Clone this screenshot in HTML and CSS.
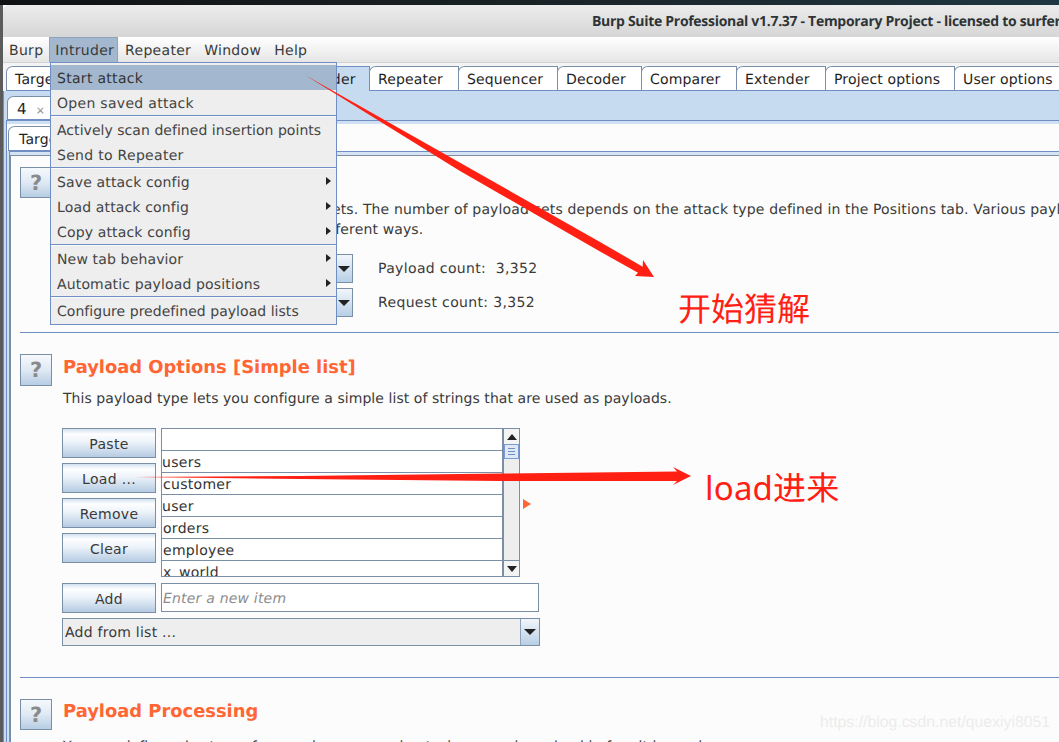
FILE: index.html
```html
<!DOCTYPE html>
<html lang="en">
<head>
<meta charset="utf-8">
<title>Burp Suite Professional</title>
<link rel="stylesheet" href="styles.css">
</head>
<body>
<div class="topstrip"></div>
<div class="window">
  <div class="titlebar">Burp Suite Professional v1.7.37 - Temporary Project - licensed to surferxyz</div>
  <div class="menubar">
    <span class="mb-item">Burp</span>
    <span class="mb-item active">Intruder</span>
    <span class="mb-item">Repeater</span>
    <span class="mb-item">Window</span>
    <span class="mb-item">Help</span>
  </div>
  <div class="tabs main-tabs">
    <span class="tab t-target">Target</span>
    <span class="tab t-proxy">Proxy</span>
    <span class="tab t-spider">Spider</span>
    <span class="tab t-scanner">Scanner</span>
    <span class="tab selected t-intruder">Intruder</span>
    <span class="tab t-repeater">Repeater</span>
    <span class="tab t-sequencer">Sequencer</span>
    <span class="tab t-decoder">Decoder</span>
    <span class="tab t-comparer">Comparer</span>
    <span class="tab t-extender">Extender</span>
    <span class="tab t-project">Project options</span>
    <span class="tab t-user">User options</span>
  </div>
  <div class="band">
    <div class="tabs sub-tabs">
      <span class="tab small">4 <i class="close">×</i></span>
    </div>
    <div class="frame">
      <div class="tabs inner-tabs">
        <span class="tab">Target</span>
        <span class="tab">Positions</span>
        <span class="tab">Payloads</span>
        <span class="tab">Options</span>
      </div>
      <div class="content">
        <section class="sec sec-first">
          <div class="sec-head">
            <span class="help">?</span>
            <h2>Payload Sets</h2>
          </div>
          <p class="desc two-line">You can define one or more payload sets. The number of payload sets depends on the attack type defined in the Positions tab. Various payload types are available for each payload set, and each<br>payload type can be customized in different ways.</p>
          <div class="set-row">
            <label class="set-label">Payload set:</label>
            <div class="combo short"><span class="combo-text">1</span><span class="combo-btn"><i class="tri"></i></span></div>
            <span class="count">Payload count:&nbsp; 3,352</span>
          </div>
          <div class="set-row second">
            <label class="set-label">Payload type:</label>
            <div class="combo short"><span class="combo-text">Simple list</span><span class="combo-btn"><i class="tri"></i></span></div>
            <span class="count">Request count: 3,352</span>
          </div>
        </section>
        <hr class="rule r1">
        <section class="sec sec-two">
          <div class="sec-head">
            <span class="help">?</span>
            <h2>Payload Options [Simple list]</h2>
          </div>
          <p class="desc">This payload type lets you configure a simple list of strings that are used as payloads.</p>
          <div class="list-block">
            <div class="btn-col">
              <button class="btn">Paste</button>
              <button class="btn">Load ...</button>
              <button class="btn">Remove</button>
              <button class="btn">Clear</button>
            </div>
            <div class="listbox">
              <div class="rows">
                <div class="row"></div>
                <div class="row">users</div>
                <div class="row ind">customer</div>
                <div class="row">user</div>
                <div class="row ind">orders</div>
                <div class="row ind">employee</div>
                <div class="row ind last">x_world</div>
              </div>
              <div class="scrollbar">
                <span class="sb-btn"><i class="tri up"></i></span>
                <span class="sb-thumb"><i></i><i></i><i></i></span>
                <span class="sb-track"></span>
                <span class="sb-btn bottom"><i class="tri"></i></span>
              </div>
            </div>
            <i class="orange-arrow"></i>
          </div>
          <div class="add-row">
            <button class="btn">Add</button>
            <div class="add-input">Enter a new item</div>
          </div>
          <div class="combo wide"><span class="combo-text">Add from list ...</span><span class="combo-btn"><i class="tri"></i></span></div>
        </section>
        <hr class="rule r2">
        <section class="sec sec-three">
          <div class="sec-head">
            <span class="help">?</span>
            <h2>Payload Processing</h2>
          </div>
          <p class="desc">You can define rules to perform various processing tasks on each payload before it is used.</p>
        </section>
      </div>
    </div>
  </div>
</div>

<div class="menu">
  <div class="mi hot loose">Start attack</div>
  <div class="mi loose">Open saved attack</div>
  <div class="sep"></div>
  <div class="mi tight">Actively scan defined insertion points</div>
  <div class="mi loose">Send to Repeater</div>
  <div class="sep"></div>
  <div class="mi sub">Save attack config</div>
  <div class="mi sub">Load attack config</div>
  <div class="mi sub">Copy attack config</div>
  <div class="sep"></div>
  <div class="mi sub">New tab behavior</div>
  <div class="mi sub">Automatic payload positions</div>
  <div class="sep"></div>
  <div class="mi tight">Configure predefined payload lists</div>
</div>

<svg class="arrows" width="1059" height="742" viewBox="0 0 1059 742" aria-hidden="true">
  <polygon fill="#ff2013" points="305,75 600,242 642.7,266.7 643,260 654,277 635,276 638,272.7 600,251.5 460,171"/>
  <polygon fill="#ff2013" points="134,477 300,476 500,473.5 677,471.5 673,467 691,476 673,485 677,481 500,481 300,479"/>
</svg>
<div class="note note-start">开始猜解</div>
<div class="note note-load">load进来</div>
<div class="watermark">https://blog.csdn.net/quexiyi8051</div>
</body>
</html>
```

FILE: styles.css
```css
* { box-sizing: border-box; }
html, body { margin: 0; padding: 0; }
body {
  width: 1059px;
  height: 742px;
  overflow: hidden;
  position: relative;
  background: #fcfcfc;
  font-family: "DejaVu Sans", sans-serif;
  font-size: 14px;
  color: #3a3a3a;
  text-rendering: geometricPrecision;
}
.topstrip {
  height: 5px;
  background: linear-gradient(90deg, #101214, #1a2226 50%, #1f3742);
}
.window {
  border-left: 3px solid #5b5b5b;
  height: 737px;
  overflow: hidden;
  background: #fcfcfc;
}
.titlebar {
  height: 32px;
  padding: 1px 0 0 589px;
  border-top-left-radius: 6px;
  background: linear-gradient(#ececec, #d6d6d6);
  font-family: "Open Sans", sans-serif;
  font-weight: 700;
  font-size: 14px;
  letter-spacing: -0.3px;
  line-height: 32px;
  color: #2e3436;
  white-space: nowrap;
  overflow: hidden;
}
.menubar {
  height: 26px;
  display: flex;
  background: linear-gradient(#ffffff, #e6e6e6);
  border-bottom: 1px solid #d2d2d2;
}
.mb-item {
  padding: 0 6px;
  letter-spacing: 0.3px;
  line-height: 28px;
  margin-right: 1px;
  height: 25px;
}
.mb-item:first-child { margin-right: 0; }
.mb-item.active {
  padding-right: 4px;
  background: #a3b8cf;
  box-shadow: inset 0 1px 0 #8ea4bd, inset 1px 0 0 #8ea4bd, inset -1px 0 0 #8ea4bd;
}
.tabs { display: flex; align-items: flex-end; }
.main-tabs {
  height: 28px;
  padding: 3px 0 0 3px;
  background: #f4f4f4;
}
.tab {
  display: block;
  flex: none;
  height: 25px;
  padding: 0 8px;
  letter-spacing: 0.15px;
  line-height: 26px;
  background: #fff;
  color: #1f1f1f;
  border: 1px solid #7a8ea8;
  border-bottom: 1px solid #6f8fc4;
  border-top-left-radius: 7px 6px;
  margin-right: -1px;
  white-space: nowrap;
}
.tab.selected {
  background: #c6dbf0;
  border-color: #6f8fc4;
  border-bottom-color: #c6dbf0;
}
.t-target { width: 66px; }
.t-proxy { width: 71px; }
.t-spider { width: 70px; }
.t-scanner { width: 80px; }
.t-intruder { width: 81px; }
.t-repeater { width: 90px; }
.t-sequencer { width: 100px; }
.t-decoder { width: 85px; }
.t-comparer { width: 96px; }
.t-extender { width: 90px; }
.t-project { width: 130px; }
.t-user { width: 120px; }
.band {
  background: #c6dbf0;
  border-left: 1px solid #7a8ea8;
  height: 651px;
}
.sub-tabs {
  height: 29px;
  padding: 6px 0 0 3px;
}
.tab.small { width: 52px; height: 24px; padding-left: 9px; font-size: 15px; line-height: 24px; }
.close { font-style: normal; font-size: 11px; color: #8a8a8a; margin-left: 4px; }
.frame {
  border-top: 1px solid #6f8fc4;
  border-left: 1px solid #6f8fc4;
  margin-left: 2px;
  padding-top: 3px;
  height: 622px;
  background: #cfe0f2;
}
.inner-tabs {
  height: 27px;
  padding-left: 1px;
  padding-top: 2px;
  background: #fcfcfc;
}
.inner-tabs .tab { padding-left: 10px; }
.content {
  margin-left: 2px;
  border-top: 1px solid #6f8fc4;
  border-left: 1px solid #7a8ea8;
  box-shadow: inset 0 3px 0 #d5e3f2, inset 0 4px 0 #7f8d9e, inset 1px 0 0 #7a8ea8;
  background: #fcfcfc;
  padding: 15px 0 0 10px;
  height: 600px;
  overflow: hidden;
}
.sec-head { display: flex; align-items: center; gap: 11px; }
.help {
  flex: none;
  display: block;
  width: 32px;
  height: 31px;
  border: 1px solid #7a8ea6;
  background: linear-gradient(#f6f9fc, #dfe9f4 50%, #b6cde3);
  color: #8a8a8a;
  font-weight: 700;
  font-size: 21px;
  line-height: 30px;
  text-align: center;
}
h2 {
  margin: -6px 0 0;
  font-size: 17.9px;
  font-weight: 700;
  color: #ff6633;
  white-space: nowrap;
}
.desc {
  margin: 3px 0 0 43px;
  letter-spacing: 0.06px;
  line-height: 20px;
  white-space: nowrap;
}
.two-line { width: 1100px; height: 40px; margin-top: 2px; letter-spacing: 0.14px; }
.set-row {
  display: flex;
  align-items: center;
  margin: 14px 0 0 43px;
  height: 29px;
}
.set-row.second { margin-top: 5px; }
.set-label { width: 100px; }
.combo {
  display: flex;
  height: 28px;
  border: 1px solid #7a8ea6;
  background: #eeeeee;
}
.combo.short { width: 190px; height: 29px; }
.combo-text { flex: 1; padding-left: 2px; letter-spacing: 0.25px; line-height: 28px; }
.combo-btn {
  flex: none;
  width: 18px;
  display: flex;
  align-items: center;
  justify-content: center;
  border-left: 1px solid #8ea4bd;
  background: linear-gradient(#f2f6fb, #b8cfe6);
}
.tri {
  display: block;
  width: 0;
  height: 0;
  border-left: 6px solid transparent;
  border-right: 6px solid transparent;
  border-top: 6px solid #222;
}
.tri.up { border-top: 0; border-bottom: 6px solid #222; }
.count { margin-left: 25px; letter-spacing: 0.35px; white-space: nowrap; }
.rule {
  height: 1px;
  border: 0;
  margin: 15px 0 0;
  background: #6f8fc4;
}
.sec-two { padding-top: 21px; }
.sec-two .help { height: 32px; }
.list-block {
  display: flex;
  gap: 5px;
  margin: 19px 0 0 42px;
  position: relative;
}
.btn-col { display: flex; flex-direction: column; gap: 5px; }
.btn {
  display: block;
  width: 94px;
  height: 30px;
  padding: 2px 0 0;
  border: 1px solid #7a8ea6;
  background: linear-gradient(#d3e1f0, #fdfeff 18%, #eef4fa 45%, #b5cbe2);
  font: inherit;
  letter-spacing: 0.3px;
  color: #3a3a3a;
}
.listbox {
  display: flex;
  width: 359px;
  height: 149px;
  border: 1px solid #7a8ea6;
  background: #fff;
}
.rows { width: 342px; overflow: hidden; height: 147px; border-right: 2px solid #7a8ea6; }
.row {
  height: 22px;
  border-bottom: 1px solid #7a8ea6;
  letter-spacing: 0.3px;
  line-height: 24px;
  color: #333;
}
.row.ind { padding-left: 1px; }
.row.last { border-bottom: 0; }
.scrollbar {
  flex: 1;
  display: flex;
  flex-direction: column;
  background: #eeeeee;
}
.sb-btn {
  display: flex;
  flex: none;
  height: 15px;
  align-items: center;
  justify-content: center;
  background: #f4f4f4;
}
.sb-btn .tri { border-left-width: 5px; border-right-width: 5px; }
.sb-btn.bottom { border-top: 1px solid #7a8ea6; height: 16px; }
.sb-thumb {
  flex: none;
  display: flex;
  flex-direction: column;
  justify-content: center;
  gap: 2px;
  height: 15px;
  padding: 0 3px;
  border: 1px solid #7a9bd8;
  background: #dfe9f6;
}
.sb-thumb i { display: block; height: 1px; background: #6f8fc4; }
.sb-track { flex: 1; }
.orange-arrow {
  position: absolute;
  left: 461px;
  top: 71px;
  width: 0;
  height: 0;
  border-top: 5px solid transparent;
  border-bottom: 5px solid transparent;
  border-left: 8px solid #ff6633;
}
.add-row { display: flex; gap: 5px; margin: 6px 0 0 42px; }
.add-input {
  width: 378px;
  height: 29px;
  border: 1px solid #7a8ea6;
  background: #fff;
  font-style: italic;
  letter-spacing: 0.2px;
  color: #8c8c8c;
  line-height: 30px;
  padding-left: 1px;
}
.combo.wide { width: 478px; margin: 5px 0 0 42px; }
.combo.wide .combo-btn { width: 19px; }
.r2 { margin-top: 31px; }
.sec-three { padding-top: 21px; }
.sec-three .desc { margin-top: 7px; }

.menu {
  position: absolute;
  left: 50px;
  top: 62px;
  width: 287px;
  height: 263px;
  padding-top: 2px;
  background: #eeeeee;
  border: 1px solid #6f8fc4;
  color: #444;
}
.mi {
  position: relative;
  height: 25px;
  letter-spacing: 0.15px;
  line-height: 28px;
  padding-left: 6px;
  white-space: nowrap;
}
.mi.tight { letter-spacing: 0.04px; }
.mi.loose { letter-spacing: 0.3px; }
.mi.hot { background: #a3b8cf; color: #333; }
.mi.sub::after {
  content: "";
  position: absolute;
  right: 5px;
  top: 8px;
  border-top: 4px solid transparent;
  border-bottom: 4px solid transparent;
  border-left: 5px solid #222;
}
.sep { height: 2px; background: #6f8fc4; border-bottom: 1px solid #fafafa; }
.arrows { position: absolute; left: 0; top: 0; pointer-events: none; }
.note {
  position: absolute;
  color: #ff2013;
  font-family: "Noto Sans", "Noto Sans CJK SC", sans-serif;
  font-size: 33px;
  line-height: 40px;
  white-space: nowrap;
}
.note-start { left: 678px; top: 289px; }
.note-load { left: 705px; top: 468px; letter-spacing: 0.2px; }
.watermark {
  position: absolute;
  left: 820px;
  top: 714px;
  font-family: "Liberation Sans", sans-serif;
  font-size: 15.8px;
  line-height: 18px;
  color: #ececec;
  white-space: nowrap;
}
```
